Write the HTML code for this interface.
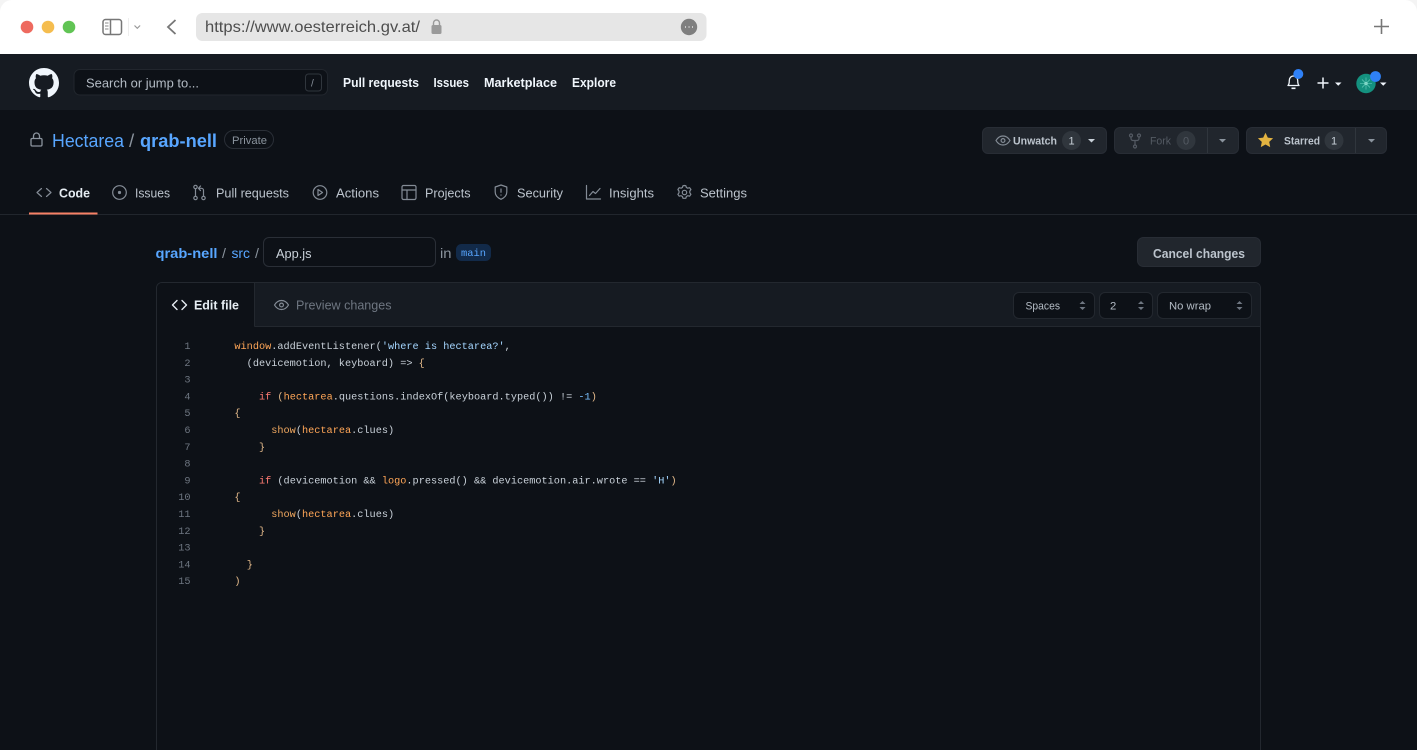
<!DOCTYPE html>
<html lang="en"><head><meta charset="utf-8"><title>App.js</title>
<style>
html,body{margin:0;padding:0;background:#f4f4f4;width:1417px;height:750px;overflow:hidden}
svg{display:block;position:absolute;left:0;top:0;filter:blur(.35px)}
text{font-family:"Liberation Sans",sans-serif;white-space:pre}
.m{font-family:"Liberation Mono",monospace;font-size:10.24px}
.ic{fill:none;stroke:#848c96;stroke-width:1.2;stroke-linecap:round;stroke-linejoin:round}
</style></head><body>
<svg width="1417" height="750" viewBox="0 0 1417 750" xmlns="http://www.w3.org/2000/svg">
<!-- browser chrome -->
<path d="M12 0H1405a12 12 0 0 1 12 12V54H0V12A12 12 0 0 1 12 0z" fill="#fff"/>
<circle cx="27" cy="27" r="6.300" fill="#ee6a5f"/><circle cx="48" cy="27" r="6.300" fill="#f5bd4f"/><circle cx="69" cy="27" r="6.300" fill="#61c454"/>
<rect x="103" y="19.500" width="18.500" height="15" rx="2.500" fill="none" stroke="#777" stroke-width="1.500"/>
<path d="M110.500 19.500v15" stroke="#777" stroke-width="1.500"/>
<path d="M105 23h3.500M105 26h3.500M105 29h3.500" stroke="#888" stroke-width="1"/>
<path d="M128.500 18v18" stroke="#eee"/>
<path d="M134.500 25.500l2.800 2.800 2.800-2.800" fill="none" stroke="#999" stroke-width="1.200"/>
<path d="M175.500 20l-7.500 7 7.500 7" fill="none" stroke="#777" stroke-width="1.800"/>
<rect x="196" y="13" width="510.500" height="28" rx="6.500" fill="#e6e6e6"/>
<text x="205" y="32" font-size="16" fill="#4e4e4e" textLength="215" lengthAdjust="spacingAndGlyphs">https://www.oesterreich.gv.at/</text>
<rect x="431.500" y="25" width="10" height="9" rx="1.500" fill="#9a9a9a"/>
<path d="M433.500 25v-2a3 3 0 0 1 6 0v2" fill="none" stroke="#9a9a9a" stroke-width="1.400"/>
<circle cx="689" cy="27" r="8.200" fill="#7f7f7f"/>
<path d="M685 27h.9M688.600 27h.9M692.100 27h.9" stroke="#eee" stroke-width="1.500"/>
<path d="M1381.500 19v15M1374 26.500h15" stroke="#777" stroke-width="1.600"/>

<!-- page -->
<rect x="0" y="54" width="1417" height="696" fill="#0d1117"/>
<rect x="0" y="54" width="1417" height="56" fill="#161b22"/>
<g transform="translate(29 68) scale(1.875)"><path fill="#f0f6fc" d="M8 0C3.580 0 0 3.580 0 8c0 3.540 2.290 6.530 5.470 7.590.4.070.55-.17.55-.38 0-.19-.01-.82-.01-1.490-2.010.37-2.530-.49-2.690-.94-.09-.23-.48-.94-.82-1.130-.28-.15-.68-.52-.01-.53.63-.01 1.080.58 1.230.82.72 1.210 1.870.87 2.330.66.070-.52.28-.87.51-1.070-1.780-.2-3.640-.89-3.640-3.950 0-.87.31-1.590.82-2.150-.08-.2-.36-1.020.08-2.120 0 0 .67-.21 2.200.82.64-.18 1.320-.27 2-.27.68 0 1.360.09 2 .27 1.530-1.040 2.200-.82 2.200-.82.44 1.100.16 1.920.08 2.120.51.56.82 1.270.82 2.150 0 3.070-1.870 3.750-3.650 3.950.29.25.54.73.54 1.480 0 1.070-.01 1.930-.01 2.200 0 .21.15.46.55.38A8.013 8.013 0 0016 8c0-4.420-3.580-8-8-8z"/></g>
<rect x="74" y="69.500" width="253.500" height="25.500" rx="6" fill="#0d1117" stroke="#21262d"/>
<text x="86" y="87.500" font-size="13" fill="#b4bcc5" textLength="113" lengthAdjust="spacingAndGlyphs">Search or jump to...</text>
<rect x="305.500" y="74" width="16" height="17" rx="3" fill="none" stroke="#30363d"/>
<text x="311" y="86.500" font-size="10" fill="#8b949e">/</text>
<g font-size="13.300" font-weight="700" fill="#f0f6fc">
<text x="343" y="87" textLength="76" lengthAdjust="spacingAndGlyphs">Pull requests</text>
<text x="433.500" y="87" textLength="35.500" lengthAdjust="spacingAndGlyphs">Issues</text>
<text x="484" y="87" textLength="73" lengthAdjust="spacingAndGlyphs">Marketplace</text>
<text x="572" y="87" textLength="44" lengthAdjust="spacingAndGlyphs">Explore</text>
</g>
<!-- right header -->
<path d="M1288 85.500c1.200-1.300 1.300-2.300 1.300-5 0-2.500 1.700-4.500 4.200-4.500s4.200 2 4.200 4.500c0 2.700.1 3.700 1.300 5z" fill="none" stroke="#f0f6fc" stroke-width="1.300" stroke-linejoin="round"/>
<path d="M1291.500 88.300h4" stroke="#f0f6fc" stroke-width="1.600"/>
<circle cx="1298.300" cy="74" r="5" fill="#2f81f7"/>
<path d="M1323 77.500v11M1317.500 83h11" stroke="#f0f6fc" stroke-width="1.500"/>
<path d="M1335 82.500h6.500l-3.250 3.200z" fill="#f0f6fc"/>
<circle cx="1366" cy="83.500" r="9.700" fill="#14917f"/>
<circle cx="1366" cy="83.500" r="1.500" fill="#e8fff8"/>
<path d="M1366 77.500v12M1360 83.500h12M1362 79.500l8 8M1370 79.500l-8 8" stroke="#6fd3c2" stroke-width=".6"/>
<circle cx="1375.500" cy="76.500" r="5.400" fill="#2f81f7"/>
<path d="M1380 82.500h6.500l-3.250 3.200z" fill="#f0f6fc"/>

<!-- repo title -->
<rect x="31" y="138.500" width="11" height="7.500" rx="1.200" fill="none" stroke="#8b949e" stroke-width="1.300"/>
<path d="M33.500 138.500v-2.500a3 3 0 0 1 6 0v2.500" fill="none" stroke="#8b949e" stroke-width="1.300"/>
<text x="52" y="147" font-size="18.700" fill="#58a6ff" textLength="72" lengthAdjust="spacingAndGlyphs">Hectarea</text>
<text x="129" y="147" font-size="18.700" fill="#8b949e">/</text>
<text x="140" y="147" font-size="18.700" font-weight="700" fill="#58a6ff" textLength="77" lengthAdjust="spacingAndGlyphs">qrab-nell</text>
<rect x="224.500" y="130.500" width="49" height="18" rx="9" fill="none" stroke="#2a2f37"/>
<text x="232" y="144" font-size="11" fill="#8b949e" textLength="35" lengthAdjust="spacingAndGlyphs">Private</text>

<!-- repo buttons -->
<g fill="#21262d" stroke="#282d35">
<rect x="982.500" y="127.500" width="124" height="26" rx="5.500"/>
<rect x="1114.500" y="127.500" width="124" height="26" rx="5.500"/>
<rect x="1246.500" y="127.500" width="140" height="26" rx="5.500"/>
</g>
<path d="M1207.500 128v25M1355.500 128v25" stroke="#30363d"/>
<g class="ic"><path d="M996 140.500c1.800-3 4.300-4.500 7-4.500s5.200 1.500 7 4.500c-1.800 3-4.300 4.500-7 4.500s-5.200-1.500-7-4.500z"/><circle cx="1003" cy="140.500" r="1.900"/></g>
<text x="1013" y="144.500" font-size="11.300" font-weight="700" fill="#bcc4cd" textLength="44" lengthAdjust="spacingAndGlyphs">Unwatch</text>
<circle cx="1071.500" cy="140.500" r="9.500" fill="#30363d"/>
<text x="1068.500" y="144.500" font-size="11" fill="#c9d1d9">1</text>
<path d="M1088 139h7l-3.500 3.500z" fill="#c9d1d9"/>
<g fill="none" stroke="#545a63" stroke-width="1.200"><circle cx="1131" cy="135.500" r="1.500"/><circle cx="1139" cy="135.500" r="1.500"/><circle cx="1135" cy="146.500" r="1.500"/><path d="M1131 137v1.500a2 2 0 0 0 2 2h4a2 2 0 0 0 2-2V137M1135 140.500v4.500"/></g>
<text x="1150" y="144.500" font-size="11.300" fill="#545a63" textLength="21" lengthAdjust="spacingAndGlyphs">Fork</text>
<circle cx="1186" cy="140.500" r="9.500" fill="#30363d"/>
<text x="1183" y="144.500" font-size="11" fill="#545a63">0</text>
<path d="M1219 139h7l-3.500 3.500z" fill="#8b949e"/>
<path d="M1265.500 132.800l2.300 4.800 5.300.7-3.900 3.600 1 5.200-4.700-2.600-4.700 2.600 1-5.200-3.900-3.600 5.300-.7z" fill="#e3b341"/>
<text x="1284" y="144.500" font-size="11.300" font-weight="700" fill="#bcc4cd" textLength="36" lengthAdjust="spacingAndGlyphs">Starred</text>
<circle cx="1334" cy="140.500" r="9.500" fill="#30363d"/>
<text x="1331" y="144.500" font-size="11" fill="#c9d1d9">1</text>
<path d="M1368 139h7l-3.500 3.500z" fill="#8b949e"/>

<!-- tabs -->
<rect x="0" y="214" width="1417" height="1" fill="#21262d"/>
<rect x="29" y="212.500" width="68.500" height="2" fill="#f78166"/>
<g class="ic">
<path d="M41.500 188.500l-4.500 4 4.500 4M46.500 188.500l4.500 4-4.500 4"/>
<circle cx="119.500" cy="192.500" r="6.800"/><circle cx="119.500" cy="192.500" r="1" fill="#8b949e"/>
<circle cx="195.500" cy="187" r="1.700"/><circle cx="195.500" cy="198" r="1.700"/><circle cx="203.500" cy="198" r="1.700"/><path d="M195.500 188.700v7.600M203.500 196.300v-6a2 2 0 0 0-2-2h-2.500M200.500 186l-2 2.300 2 2.300"/>
<circle cx="320" cy="192.500" r="6.800"/><path d="M318 189.500v6l4.500-3z"/>
<rect x="402" y="185.500" width="14" height="14" rx="1.500"/><path d="M402 190h14M407 190v9.500"/>
<path d="M501 185l5.800 2v5c0 3.500-2.500 5.800-5.800 7.300-3.300-1.500-5.800-3.800-5.800-7.300v-5z"/><path d="M501 189v3.200M501 195v.1"/>
<path d="M586.500 185.500v13.500h14M589.500 195.500l3.500-4 2.500 2 4.500-5"/>
<path d="M684.500 185.500h-.1l-1.400.2-.6 1.800-1.300.7-1.900-.5-1.300 1.800 1.100 1.600v1.700l-1.100 1.500 1.300 1.900 1.900-.5 1.300.8.6 1.800h2.800l.6-1.800 1.300-.8 1.900.5 1.300-1.900-1.100-1.500v-1.700l1.100-1.600-1.300-1.800-1.900.5-1.300-.7-.6-1.800z"/><circle cx="684.500" cy="192.500" r="2.200"/>
</g>
<g font-size="13.300" fill="#bcc4cd">
<text x="59" y="197.500" font-weight="700" fill="#e6edf3" textLength="31" lengthAdjust="spacingAndGlyphs">Code</text>
<text x="135" y="197.500" textLength="35" lengthAdjust="spacingAndGlyphs">Issues</text>
<text x="216" y="197.500" textLength="73" lengthAdjust="spacingAndGlyphs">Pull requests</text>
<text x="336" y="197.500" textLength="43" lengthAdjust="spacingAndGlyphs">Actions</text>
<text x="425" y="197.500" textLength="45.500" lengthAdjust="spacingAndGlyphs">Projects</text>
<text x="517" y="197.500" textLength="46" lengthAdjust="spacingAndGlyphs">Security</text>
<text x="609" y="197.500" textLength="45" lengthAdjust="spacingAndGlyphs">Insights</text>
<text x="700" y="197.500" textLength="47" lengthAdjust="spacingAndGlyphs">Settings</text>
</g>

<!-- breadcrumb -->
<text x="155.500" y="258" font-size="14.200" font-weight="700" fill="#58a6ff" textLength="62" lengthAdjust="spacingAndGlyphs">qrab-nell</text>
<text x="222" y="258" font-size="14.200" fill="#8b949e">/</text>
<text x="231.500" y="258" font-size="14.200" fill="#58a6ff" textLength="18.500" lengthAdjust="spacingAndGlyphs">src</text>
<text x="255" y="258" font-size="14.200" fill="#8b949e">/</text>
<rect x="263.500" y="237.500" width="172" height="29" rx="5.500" fill="#0d1117" stroke="#2a2f37"/>
<text x="276" y="258" font-size="13.300" fill="#c9d1d9" textLength="35.500" lengthAdjust="spacingAndGlyphs">App.js</text>
<text x="440" y="258" font-size="14.200" fill="#8b949e" textLength="11.500" lengthAdjust="spacingAndGlyphs">in</text>
<rect x="456" y="244" width="35" height="17" rx="5.500" fill="#122a49"/>
<text x="461" y="256" class="m" fill="#58a6ff" style="font-size:10.300px" textLength="25" lengthAdjust="spacingAndGlyphs">main</text>
<rect x="1137.500" y="237.500" width="123" height="29" rx="6" fill="#21262d" stroke="#282d35"/>
<text x="1153" y="258" font-size="13.300" font-weight="700" fill="#bcc4cd" textLength="92" lengthAdjust="spacingAndGlyphs">Cancel changes</text>

<!-- editor -->
<path d="M156.500 750V288a5.500 5.500 0 0 1 5.500-5.500H1255a5.500 5.500 0 0 1 5.500 5.500V750" fill="#0d1117" stroke="#23282f"/>
<path d="M157 326.500V288a5 5 0 0 1 5-5H1255a5 5 0 0 1 5 5v38.500z" fill="#161b22"/>
<path d="M157 326.500h1103" stroke="#23282f"/>
<path d="M157 327.500V288a5 5 0 0 1 5-5h92.500v44.500z" fill="#0d1117"/>
<path d="M254.500 283v43.500" stroke="#23282f"/>
<path d="M177 300.500l-4.500 4.500 4.500 4.500M182 300.500l4.500 4.500-4.500 4.500" fill="none" stroke="#e6edf3" stroke-width="1.400" stroke-linecap="round" stroke-linejoin="round"/>
<text x="194" y="309.500" font-size="13.300" font-weight="700" fill="#e6edf3" textLength="45" lengthAdjust="spacingAndGlyphs">Edit file</text>
<g class="ic"><path d="M274.500 305c1.800-3 4.300-4.500 7-4.500s5.200 1.500 7 4.500c-1.800 3-4.300 4.500-7 4.500s-5.200-1.500-7-4.500z"/><circle cx="281.500" cy="305" r="1.900"/></g>
<text x="296" y="309.500" font-size="13.300" fill="#6e7681" textLength="95.500" lengthAdjust="spacingAndGlyphs">Preview changes</text>
<g fill="#0d1117" stroke="#23282f">
<rect x="1013.500" y="292.500" width="81" height="26" rx="5.500"/>
<rect x="1099.500" y="292.500" width="53" height="26" rx="5.500"/>
<rect x="1157.500" y="292.500" width="94" height="26" rx="5.500"/>
</g>
<g font-size="11.300" fill="#b4bcc5">
<text x="1025.500" y="309.500" textLength="34.500" lengthAdjust="spacingAndGlyphs">Spaces</text>
<text x="1110" y="309.500">2</text>
<text x="1169" y="309.500" textLength="42" lengthAdjust="spacingAndGlyphs">No wrap</text>
</g>
<g fill="#6e7681">
<path d="M1079.500 304l3-3 3 3zM1079.500 307l3 3 3-3z"/>
<path d="M1138 304l3-3 3 3zM1138 307l3 3 3-3z"/>
<path d="M1236.500 304l3-3 3 3zM1236.500 307l3 3 3-3z"/>
</g>

<!-- line numbers -->
<g fill="#6e7681" text-anchor="end">
<text x="190.500" y="349" class="m">1</text>
<text x="190.500" y="365.800" class="m">2</text>
<text x="190.500" y="382.600" class="m">3</text>
<text x="190.500" y="399.400" class="m">4</text>
<text x="190.500" y="416.200" class="m">5</text>
<text x="190.500" y="433" class="m">6</text>
<text x="190.500" y="449.800" class="m">7</text>
<text x="190.500" y="466.600" class="m">8</text>
<text x="190.500" y="483.400" class="m">9</text>
<text x="190.500" y="500.200" class="m">10</text>
<text x="190.500" y="517" class="m">11</text>
<text x="190.500" y="533.800" class="m">12</text>
<text x="190.500" y="550.600" class="m">13</text>
<text x="190.500" y="567.400" class="m">14</text>
<text x="190.500" y="584.200" class="m">15</text>
</g>
<!-- code -->
<g fill="#c9d1d9">
<text class="m" x="234.400" y="349"><tspan fill="#ffa657">window</tspan>.addEventListener(<tspan fill="#a5d6ff">'where is hectarea?'</tspan>,</text>
<text class="m" x="234.400" y="365.800">  (devicemotion, keyboard) =&gt; <tspan fill="#e3b98a">{</tspan></text>
<text class="m" x="234.400" y="399.400">    <tspan fill="#ff7b72">if</tspan> <tspan fill="#e3b98a">(</tspan><tspan fill="#ffa657">hectarea</tspan>.questions.indexOf(keyboard.typed()) != <tspan fill="#79c0ff">-1</tspan><tspan fill="#e3b98a">)</tspan></text>
<text class="m" x="234.400" y="416.200"><tspan fill="#e3b98a">{</tspan></text>
<text class="m" x="234.400" y="433">      <tspan fill="#f0a860">show</tspan>(<tspan fill="#ffa657">hectarea</tspan>.clues)</text>
<text class="m" x="234.400" y="449.800">    <tspan fill="#e3b98a">}</tspan></text>
<text class="m" x="234.400" y="483.400">    <tspan fill="#ff7b72">if</tspan> (devicemotion &amp;&amp; <tspan fill="#ffa657">logo</tspan>.pressed() &amp;&amp; devicemotion.air.wrote == <tspan fill="#a5d6ff">'H'</tspan><tspan fill="#e3b98a">)</tspan></text>
<text class="m" x="234.400" y="500.200"><tspan fill="#e3b98a">{</tspan></text>
<text class="m" x="234.400" y="517">      <tspan fill="#f0a860">show</tspan>(<tspan fill="#ffa657">hectarea</tspan>.clues)</text>
<text class="m" x="234.400" y="533.800">    <tspan fill="#e3b98a">}</tspan></text>
<text class="m" x="234.400" y="567.400">  <tspan fill="#e3b98a">}</tspan></text>
<text class="m" x="234.400" y="584.200"><tspan fill="#e3b98a">)</tspan></text>
</g>
</svg>
</body></html>
